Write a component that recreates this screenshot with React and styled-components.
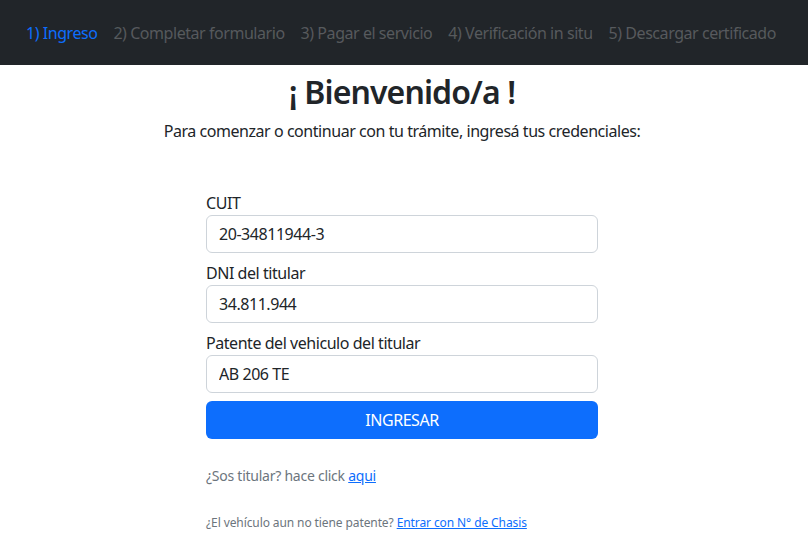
import styled, { createGlobalStyle } from "styled-components";

const GlobalStyle = createGlobalStyle`
  body {
    margin: 0;
    background: #ffffff;
    font-family: "Noto Sans", "Open Sans", sans-serif;
    color: #212529;
    letter-spacing: -0.45px;
  }
`;

const steps = [
  "1) Ingreso",
  "2) Completar formulario",
  "3) Pagar el servicio",
  "4) Verificación in situ",
  "5) Descargar certificado",
];

export default function App() {
  return (
    <>
      <GlobalStyle />
      <Nav>
        {steps.map((step, index) => (
          <NavItem key={step} $active={index === 0}>
            {step}
          </NavItem>
        ))}
      </Nav>
      <Main>
        <Title>¡ Bienvenido/a !</Title>
        <Subtitle>
          Para comenzar o continuar con tu trámite, ingresá tus credenciales:
        </Subtitle>
        <Form onSubmit={(e) => e.preventDefault()}>
          <Label>CUIT</Label>
          <Input defaultValue="20-34811944-3" />
          <Label>DNI del titular</Label>
          <Input defaultValue="34.811.944" />
          <Label>Patente del vehiculo del titular</Label>
          <Input defaultValue="AB 206 TE" />
          <Button type="submit">INGRESAR</Button>
          <Help>
            ¿Sos titular? hace click <a href="#">aqui</a>
          </Help>
          <SmallHelp>
            ¿El vehículo aun no tiene patente? <a href="#">Entrar con N° de Chasis</a>
          </SmallHelp>
        </Form>
      </Main>
    </>
  );
}

const Nav = styled.nav`
  height: 65px;
  background: #212529;
  display: flex;
  align-items: center;
  justify-content: center;
  gap: 16px;
  padding-right: 6px;
`;

const NavItem = styled.span`
  font-size: 16px;
  color: ${(p) => (p.$active ? "#0d6efd" : "rgba(255, 255, 255, 0.25)")};
`;

const Main = styled.main`
  display: flex;
  flex-direction: column;
  align-items: center;
  padding-right: 4px;
`;

const Title = styled.h1`
  margin: 8px 0 8px;
  font-size: 32px;
  line-height: 1.2;
  font-weight: 600;
  letter-spacing: -0.9px;
`;

const Subtitle = styled.p`
  margin: 0;
  font-size: 16px;
  line-height: 24px;
`;

const Form = styled.form`
  width: 392px;
  margin-top: 48px;
  display: flex;
  flex-direction: column;
`;

const Label = styled.label`
  font-size: 16px;
  line-height: 24px;
`;

const Input = styled.input`
  box-sizing: border-box;
  height: 38px;
  margin-bottom: 8px;
  padding: 6px 12px;
  border: 1px solid #ced4da;
  border-radius: 6px;
  font-family: inherit;
  font-size: 16px;
  letter-spacing: inherit;
  color: #212529;
`;

const Button = styled.button`
  height: 38px;
  border: none;
  border-radius: 6px;
  background: #0d6efd;
  color: #ffffff;
  font-family: inherit;
  font-size: 16px;
  letter-spacing: inherit;
`;

const Help = styled.p`
  margin: 26px 0 0;
  font-size: 14px;
  line-height: 21px;
  color: #6c757d;
  letter-spacing: -0.25px;

  a {
    color: #0d6efd;
  }
`;

const SmallHelp = styled.p`
  margin: 28px 0 0;
  font-size: 12px;
  line-height: 18px;
  color: #6c757d;
  letter-spacing: -0.1px;

  a {
    color: #0d6efd;
  }
`;
